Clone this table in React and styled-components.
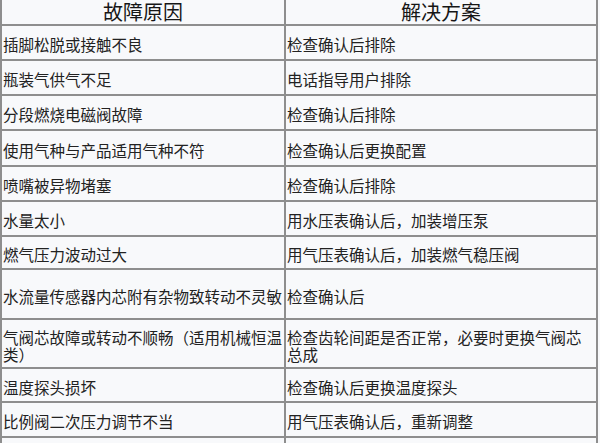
import React from 'react';
import styled, { createGlobalStyle } from 'styled-components';

const GlobalStyle = createGlobalStyle`
    html, body {
        margin: 0;
        padding: 0;
        background: #f8f9fb;
        overflow: hidden;
    }
    body {
        font-family: "Noto Sans CJK SC", "Noto Sans", sans-serif;
        color: #222;
    }
`;

const Sheet = styled.div`
    display: grid;
    grid-template-columns: 282px 310px;
    gap: 2px;
    padding: 0 2px 2px 2px;
    width: 594px;
    background: #8e8e8e;
`;

const HeadCell = styled.div`
    height: 24px;
    display: flex;
    align-items: center;
    justify-content: center;
    background: #f8f9fb;
    font-size: 20px;
    line-height: 24px;
    color: #161616;
`;

const Cell = styled.div`
    height: ${(props) => props.$h}px;
    box-sizing: border-box;
    display: flex;
    align-items: center;
    padding: 4px 1px 0 1px;
    background: #f8f9fb;
    font-size: 15.5px;
    line-height: 17px;
    color: #222;
`;

const rows = [
    ['插脚松脱或接触不良', '检查确认后排除', 33],
    ['瓶装气供气不足', '电话指导用户排除', 33],
    ['分段燃烧电磁阀故障', '检查确认后排除', 33],
    ['使用气种与产品适用气种不符', '检查确认后更换配置', 34],
    ['喷嘴被异物堵塞', '检查确认后排除', 33],
    ['水量太小', '用水压表确认后，加装增压泵', 33],
    ['燃气压力波动过大', '用气压表确认后，加装燃气稳压阀', 31],
    ['水流量传感器内芯附有杂物致转动不灵敏', '检查确认后', 48],
    ['气阀芯故障或转动不顺畅（适用机械恒温类）', '检查齿轮间距是否正常，必要时更换气阀芯总成', 47],
    ['温度探头损坏', '检查确认后更换温度探头', 32],
    ['比例阀二次压力调节不当', '用气压表确认后，重新调整', 33],
    ['', '', 33],
];

const App = () => {
    return (
        <>
            <GlobalStyle />
            <Sheet>
                <HeadCell>故障原因</HeadCell>
                <HeadCell>解决方案</HeadCell>
                {rows.map(([cause, fix, h], i) => (
                    <React.Fragment key={i}>
                        <Cell $h={h}>{cause}</Cell>
                        <Cell $h={h}>{fix}</Cell>
                    </React.Fragment>
                ))}
            </Sheet>
        </>
    );
};

export default App;
